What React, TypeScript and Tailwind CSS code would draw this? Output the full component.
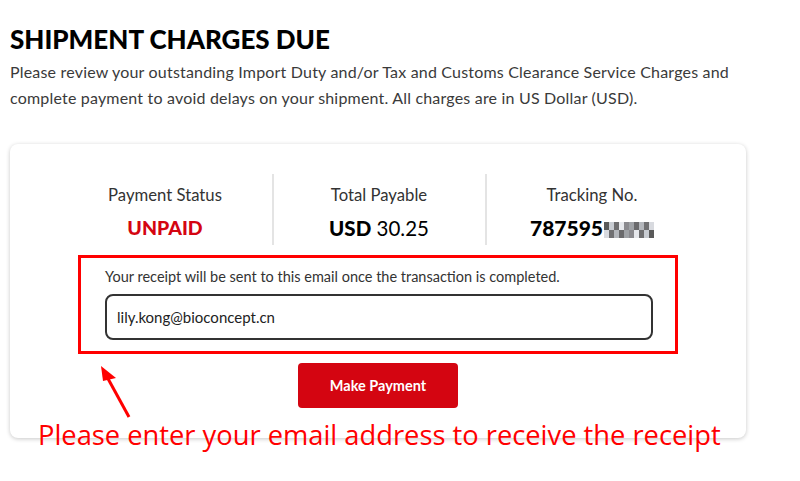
import React from 'react';

const blurCells = [
  '#5a5a5a', '#c8ccd2', '#6e6e70', '#e6e8ec', '#8a8a8e', '#9fa2a6', '#6a6a6c', '#b4b7bc', '#707072', '#d8dadf',
];

function Pixelated() {
  return (
    <span className="ml-[1px] inline-flex h-[16px] translate-y-[2px] flex-col">
      <span className="flex h-[8px]">
        {blurCells.map((c, i) => (
          <span key={i} className="h-full w-[5px]" style={{ background: c }} />
        ))}
      </span>
      <span className="flex h-[8px]">
        {blurCells.slice().reverse().map((c, i) => (
          <span key={i} className="h-full w-[5px]" style={{ background: c }} />
        ))}
      </span>
    </span>
  );
}

function Stat({ label, children, divider }: { label: string; children: React.ReactNode; divider?: boolean }) {
  return (
    <div className={`flex w-[213px] flex-col items-center gap-[5px] ${divider ? 'border-l-2 border-[#e4e4e4]' : ''}`}>
      <div className="pt-[10px] text-[16.7px] leading-[22px] text-[#333]">{label}</div>
      <div className="h-[34px]">{children}</div>
    </div>
  );
}

export default function App() {
  return (
    <div className="relative h-[481px] w-[800px] overflow-hidden bg-white font-['Lato',sans-serif]">
      <div className="px-[10px] pt-[22px]">
        <h1 className="text-[26px] font-black leading-[34px] text-black">SHIPMENT CHARGES DUE</h1>
        <p className="mt-[3px] text-[16px] leading-[26px] tracking-[0.19px] text-[#3a3a3a]">
          Please review your outstanding Import Duty and/or Tax and Customs Clearance Service Charges and
          <br />
          complete payment to avoid delays on your shipment. All charges are in US Dollar (USD).
        </p>

        <div className="mt-[33px] h-[294px] w-[736px] rounded-[8px] bg-white shadow-[0_1px_4px_rgba(0,0,0,0.22)]">
          <div className="flex justify-center pt-[30px]">
            <Stat label="Payment Status">
              <span className="text-[19.5px] font-black leading-[34px] text-[#d40511]">UNPAID</span>
            </Stat>
            <Stat label="Total Payable" divider>
              <span className="text-[20.5px] leading-[34px] text-black">
                <span className="font-black">USD</span> 30.25
              </span>
            </Stat>
            <Stat label="Tracking No." divider>
              <span className="flex items-center text-[21px] font-black leading-[34px] text-black">
                787595
                <Pixelated />
              </span>
            </Stat>
          </div>

          <div className="mx-auto mt-[10px] w-[600px] border-[3px] border-[#ff0000] px-[24px] pb-[11px] pt-[10px]">
            <div className="text-[14.5px] leading-[18px] text-[#333]">
              Your receipt will be sent to this email once the transaction is completed.
            </div>
            <div className="mt-[8px] flex h-[46px] w-[548px] items-center rounded-[8px] border-2 border-[#333] px-[10px] text-[15px] text-[#222]">
              lily.kong@bioconcept.cn
            </div>
          </div>

          <div className="flex justify-center pt-[9px]">
            <button className="h-[45px] w-[160px] rounded-[4px] bg-[#d40511] text-[14.5px] font-bold text-white">
              Make Payment
            </button>
          </div>
        </div>
      </div>

      <svg className="absolute left-[96px] top-[362px]" width="40" height="60" viewBox="0 0 40 60">
        <line x1="33" y1="55" x2="10" y2="13" stroke="#ff0000" strokeWidth="3" />
        <polygon points="5,4 20,16 7,19" fill="#ff0000" />
      </svg>

      <div className="absolute left-[38px] top-[418px] whitespace-nowrap font-['Open_Sans',sans-serif] text-[27.3px] leading-[34px] text-[#ff0000]">
        Please enter your email address to receive the receipt
      </div>
    </div>
  );
}
